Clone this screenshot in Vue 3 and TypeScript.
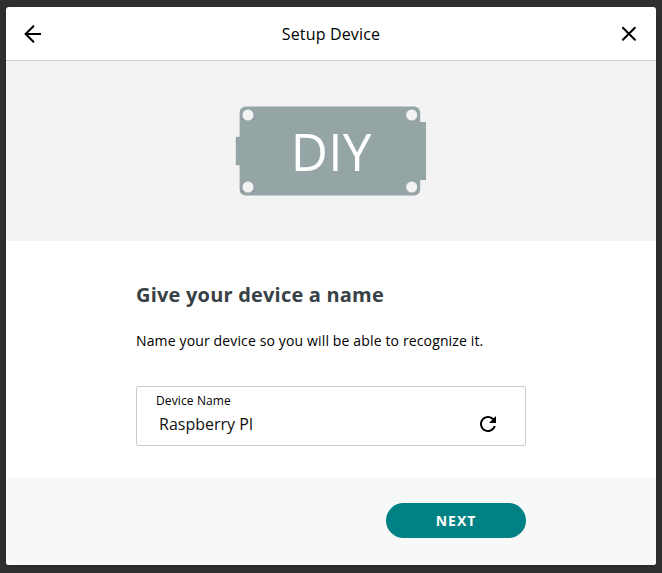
<script setup lang="ts">
import { ref } from 'vue'

const deviceName = ref('Raspberry PI')
const holes = [
  { x: 12, y: 9 },
  { x: 175.7, y: 9 },
  { x: 12, y: 81 },
  { x: 175.7, y: 81 },
]
</script>

<template>
  <div class="backdrop">
    <section class="dialog">
      <header class="header">
        <button class="icon-button" aria-label="Back">
          <svg width="24" height="24" viewBox="0 0 24 24" fill="none" stroke="#000" stroke-width="2">
            <path d="M20 12H4.5" />
            <path d="M12.4 4.2L4.6 12L12.4 19.8" stroke-linecap="round" />
          </svg>
        </button>
        <h1 class="title">Setup Device</h1>
        <button class="icon-button" aria-label="Close">
          <svg width="24" height="24" viewBox="0 0 24 24" fill="none" stroke="#000" stroke-width="2" stroke-linecap="round">
            <path d="M5.9 5.7L17.9 17.7M17.9 5.7L5.9 17.7" />
          </svg>
        </button>
      </header>

      <div class="hero">
        <svg class="board" width="190" height="90" viewBox="0 0 190 90">
          <g fill="#95a5a5">
            <rect x="3.6" y="0.4" width="180.6" height="89.2" rx="6" />
            <rect x="-0.2" y="30.8" width="5" height="28.4" />
            <rect x="183" y="16" width="7" height="58" />
          </g>
          <circle v-for="(h, i) in holes" :key="i" :cx="h.x" :cy="h.y" r="5.5" fill="#f3f3f3" />
          <text class="board-label" x="54.7" y="64.8">DIY</text>
        </svg>
      </div>

      <main class="content">
        <h2 class="heading">Give your device a name</h2>
        <p class="description">Name your device so you will be able to recognize it.</p>
        <div class="field">
          <div class="field-text">
            <label class="label" for="device-name">Device Name</label>
            <input id="device-name" v-model="deviceName" class="input" type="text" spellcheck="false" />
          </div>
          <button class="icon-button refresh" aria-label="Refresh">
            <svg width="24" height="24" viewBox="0 0 24 24" fill="#000">
              <path d="M17.65 6.35C16.2 4.9 14.21 4 12 4c-4.42 0-7.99 3.58-7.99 8s3.57 8 7.99 8c3.73 0 6.84-2.55 7.73-6h-2.08c-.82 2.33-3.04 4-5.65 4-3.31 0-6-2.69-6-6s2.69-6 6-6c1.66 0 3.14.69 4.22 1.78L13 11h7V4l-2.35 2.35z" />
            </svg>
          </button>
        </div>
      </main>

      <footer class="footer">
        <button class="next">NEXT</button>
      </footer>
    </section>
  </div>
</template>

<style>
body {
  background: #303030;
}
</style>

<style scoped>
* {
  box-sizing: border-box;
  margin: 0;
}
.backdrop {
  height: 573px;
  padding: 7px 6px 8px;
  overflow: hidden;
  background: #303030;
  font-family: "Open Sans", sans-serif;
  color: #000;
}
.dialog {
  display: flex;
  flex-direction: column;
  height: 558px;
  border-radius: 3px;
  overflow: hidden;
  background: #fff;
  box-shadow: 0 2px 8px rgba(0, 0, 0, 0.15);
}
.header {
  display: flex;
  align-items: center;
  justify-content: space-between;
  height: 54px;
  padding: 0 15px;
  border-bottom: 1px solid #c9cdcd;
}
.icon-button {
  display: flex;
  padding: 0;
  border: 0;
  background: none;
}
.title {
  font-size: 16px;
  font-weight: 400;
  line-height: 24px;
  letter-spacing: 0.01em;
}
.hero {
  display: flex;
  justify-content: center;
  height: 180px;
  padding-top: 45px;
  background: #f3f3f3;
}
.board {
  overflow: visible;
}
.board-label {
  font-size: 51.3px;
  font-weight: 400;
  letter-spacing: 0.3px;
  fill: #fff;
}
.content {
  display: flex;
  flex-direction: column;
  height: 237px;
  padding: 40px 130px 0;
}
.heading {
  font-size: 20px;
  font-weight: 700;
  line-height: 28px;
  letter-spacing: 0.01em;
  color: #374146;
}
.description {
  margin-top: 22px;
  font-size: 14px;
  line-height: 20px;
  letter-spacing: 0.01em;
}
.field {
  display: flex;
  justify-content: space-between;
  height: 60px;
  margin-top: 35px;
  padding: 5px 25px 0 19px;
  border: 1px solid #c9cdcd;
  border-radius: 2px;
}
.field-text {
  display: flex;
  flex-direction: column;
}
.label {
  font-size: 12px;
  line-height: 17px;
  letter-spacing: 0.01em;
}
.input {
  width: 260px;
  height: 28px;
  margin-top: 1px;
  padding: 0 3px;
  border: 0;
  outline: 0;
  background: transparent;
  font: 16px/28px "Open Sans", sans-serif;
  color: #111;
}
.refresh {
  align-self: flex-start;
  margin-top: 20px;
}
.footer {
  display: flex;
  justify-content: flex-end;
  height: 87px;
  padding: 25px 130px 0;
  background: #f7f9f9;
}
.next {
  width: 140px;
  height: 35px;
  padding: 0;
  border: 0;
  border-radius: 18px;
  background: #008183;
  font: 700 14px/35px "Open Sans", sans-serif;
  letter-spacing: 1px;
  color: #fff;
}
</style>
